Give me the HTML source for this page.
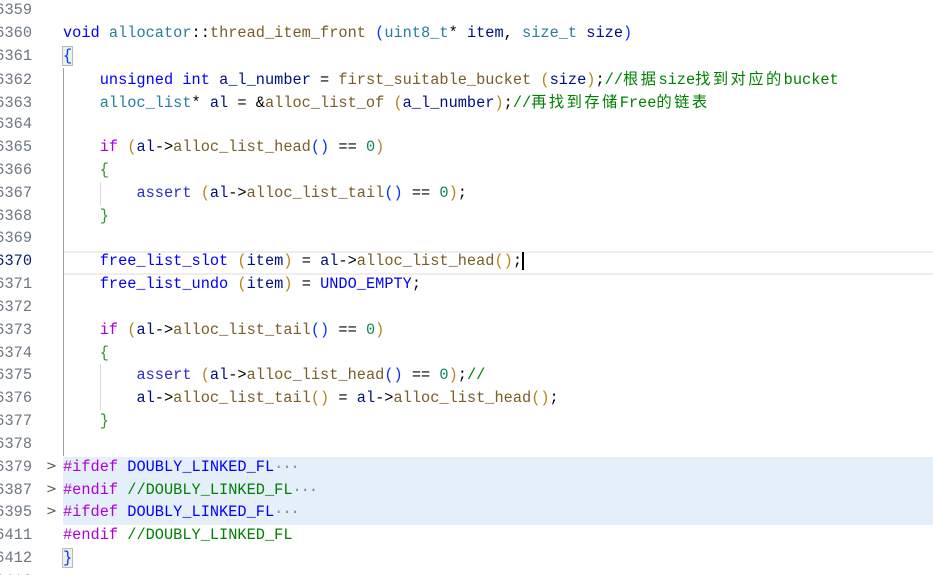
<!DOCTYPE html>
<html><head><meta charset="utf-8"><style>
html,body{margin:0;padding:0;background:#fff;width:933px;height:575px;overflow:hidden;position:relative}
.w{position:absolute;left:0;top:1.5px;width:933px;height:600px}
.l{position:absolute;left:0;width:933px;height:22.83px;line-height:22.83px;font-family:"Liberation Mono","Noto Sans CJK SC",monospace;font-size:15.3px;white-space:pre;color:#000}
.n{position:absolute;left:-40px;width:72px;text-align:right;color:#6e7681}
.c{position:absolute;left:63px}
.k{color:#0000ff}.f{color:#795e26}.t{color:#267f99}.v{color:#001080}.num{color:#098658}.cm{color:#008000}.p{color:#af00db}.m{color:#0000ff}
.b0{color:#0431fa}.b1{color:#b0851a}.b2{color:#319331}.a{color:#2c2cc8}
.cj{letter-spacing:2.4px}
.chev{position:absolute;left:46px;top:0;color:#555;font-family:"DejaVu Sans",sans-serif;font-size:13px}
.g{position:absolute;width:1px;background:#d8d8d8}
.el{color:#888;letter-spacing:-1px}
</style></head><body><div class="w">
<div style="position:absolute;left:63px;top:455px;width:870px;height:68.5px;background:#e5eff9"></div>
<div style="position:absolute;left:64px;top:249px;width:869px;height:2px;background:#eeeeee"></div>
<div style="position:absolute;left:64px;top:271px;width:869px;height:2px;background:#eeeeee"></div>
<div class="g" style="left:63px;top:66px;height:388px;background:#a0a0a0"></div>
<div class="g" style="left:100px;top:180px;height:23px"></div>
<div class="g" style="left:100px;top:362px;height:46px"></div>

<div class="l" style="top:-2.4px"><span class="n">6359</span></div>
<div class="l" style="top:20.4px"><span class="n">6360</span><span class="c"><span class="k">void</span> <span class="t">allocator</span>::<span class="f">thread_item_front</span> <span class="b0">(</span><span class="t">uint8_t</span>* <span class="v">item</span>, <span class="t">size_t</span> <span class="v">size</span><span class="b0">)</span></span></div>
<div class="l" style="top:43.3px"><span class="n">6361</span><span class="c"><span class="b0" style="outline:1px solid #b9b9b9;background:#eaf2ea">{</span></span></div>
<div class="l" style="top:67.8px"><span class="n">6362</span><span class="c">    <span class="k">unsigned</span> <span class="k">int</span> <span class="v">a_l_number</span> = <span class="f">first_suitable_bucket</span> <span class="b1">(</span><span class="v">size</span><span class="b1">)</span>;<span class="cm">//<span class="cj">根据</span>size<span class="cj">找到对应的</span>bucket</span></span></div>
<div class="l" style="top:90.6px"><span class="n">6363</span><span class="c">    <span class="t">alloc_list</span>* <span class="v">al</span> = &amp;<span class="f">alloc_list_of</span> <span class="b1">(</span><span class="v">a_l_number</span><span class="b1">)</span>;<span class="cm">//<span class="cj">再找到存储</span>Free<span class="cj">的链表</span></span></span></div>
<div class="l" style="top:111.8px"><span class="n">6364</span></div>
<div class="l" style="top:134.6px"><span class="n">6365</span><span class="c">    <span class="p">if</span> <span class="b1">(</span><span class="v">al</span>-&gt;<span class="f">alloc_list_head</span><span class="b0">()</span> == <span class="num">0</span><span class="b1">)</span></span></div>
<div class="l" style="top:157.4px"><span class="n">6366</span><span class="c">    <span class="b2">{</span></span></div>
<div class="l" style="top:180.2px"><span class="n">6367</span><span class="c">        <span class="a">assert</span> <span class="b1">(</span><span class="v">al</span>-&gt;<span class="f">alloc_list_tail</span><span class="b0">()</span> == <span class="num">0</span><span class="b1">)</span>;</span></div>
<div class="l" style="top:203.1px"><span class="n">6368</span><span class="c">    <span class="b2">}</span></span></div>
<div class="l" style="top:225.9px"><span class="n">6369</span></div>
<div class="l" style="top:248.7px"><span class="n" style="color:#0b216f">6370</span><span class="c">    <span class="m">free_list_slot</span> <span class="b1">(</span><span class="v">item</span><span class="b1">)</span> = <span class="v">al</span>-&gt;<span class="f">alloc_list_head</span><span class="b1">()</span>;<span style="border-left:2px solid #000"></span></span></div>
<div class="l" style="top:271.5px"><span class="n">6371</span><span class="c">    <span class="m">free_list_undo</span> <span class="b1">(</span><span class="v">item</span><span class="b1">)</span> = <span class="m">UNDO_EMPTY</span>;</span></div>
<div class="l" style="top:294.4px"><span class="n">6372</span></div>
<div class="l" style="top:317.2px"><span class="n">6373</span><span class="c">    <span class="p">if</span> <span class="b1">(</span><span class="v">al</span>-&gt;<span class="f">alloc_list_tail</span><span class="b0">()</span> == <span class="num">0</span><span class="b1">)</span></span></div>
<div class="l" style="top:340px"><span class="n">6374</span><span class="c">    <span class="b2">{</span></span></div>
<div class="l" style="top:362.8px"><span class="n">6375</span><span class="c">        <span class="a">assert</span> <span class="b1">(</span><span class="v">al</span>-&gt;<span class="f">alloc_list_head</span><span class="b0">()</span> == <span class="num">0</span><span class="b1">)</span>;<span class="cm">//</span></span></div>
<div class="l" style="top:385.7px"><span class="n">6376</span><span class="c">        <span class="v">al</span>-&gt;<span class="f">alloc_list_tail</span><span class="b1">()</span> = <span class="v">al</span>-&gt;<span class="f">alloc_list_head</span><span class="b1">()</span>;</span></div>
<div class="l" style="top:408.5px"><span class="n">6377</span><span class="c">    <span class="b2">}</span></span></div>
<div class="l" style="top:431.3px"><span class="n">6378</span></div>
<div class="l" style="top:454.1px"><span class="n">6379</span><span class="chev">&gt;</span><span class="c"><span class="p">#ifdef</span> <span class="m">DOUBLY_LINKED_FL</span><span class="el">···</span></span></div>
<div class="l" style="top:477px"><span class="n">6387</span><span class="chev">&gt;</span><span class="c"><span class="p">#endif</span> <span class="cm">//DOUBLY_LINKED_FL</span><span class="el">···</span></span></div>
<div class="l" style="top:499.8px"><span class="n">6395</span><span class="chev">&gt;</span><span class="c"><span class="p">#ifdef</span> <span class="m">DOUBLY_LINKED_FL</span><span class="el">···</span></span></div>
<div class="l" style="top:522.6px"><span class="n">6411</span><span class="c"><span class="p">#endif</span> <span class="cm">//DOUBLY_LINKED_FL</span></span></div>
<div class="l" style="top:545.4px"><span class="n">6412</span><span class="c"><span class="b0" style="outline:1px solid #b9b9b9;background:#eaf2ea">}</span></span></div>
<div class="l" style="top:568.3px"><span class="n">6413</span></div>
</div></body></html>
